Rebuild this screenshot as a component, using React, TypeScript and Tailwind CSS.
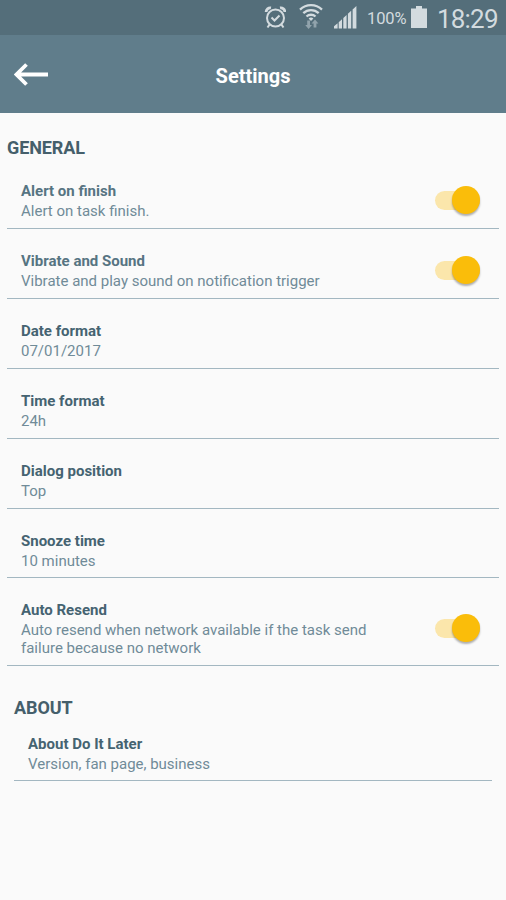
import { useState } from "react";

interface Setting {
    id: string;
    title: string;
    summary: string;
    toggle?: boolean;
    soft?: boolean;
}

const generalSettings: Setting[] = [
    { id: "alert", title: "Alert on finish", summary: "Alert on task finish.", toggle: true, soft: true },
    { id: "vibrate", title: "Vibrate and Sound", summary: "Vibrate and play sound on notification trigger", toggle: true, soft: true },
    { id: "date", title: "Date format", summary: "07/01/2017" },
    { id: "time", title: "Time format", summary: "24h" },
    { id: "dialog", title: "Dialog position", summary: "Top" },
    { id: "snooze", title: "Snooze time", summary: "10 minutes" },
    { id: "resend", title: "Auto Resend", summary: "Auto resend when network available if the task send failure because no network", toggle: true },
];

const aboutSettings: Setting[] = [
    { id: "about", title: "About Do It Later", summary: "Version, fan page, business" },
];

function AlarmIcon() {
    return (
        <svg width="22" height="24" viewBox="0 0 22 24" fill="none" stroke="currentColor" strokeWidth="2">
            <circle cx="11.500" cy="12" r="8.500" />
            <path d="M7.500 11.500l3 3 5-5" />
            <path d="M2.100 6.100A4.200 4.200 0 0 1 7 1.900M20.900 6.100a4.200 4.200 0 0 0-4.900-4.200" strokeWidth="2.800" />
            <path d="M5.500 18.700l-2 2.800M17.500 18.700l2 2.800" />
        </svg>
    );
}

function WifiIcon() {
    return (
        <svg width="24" height="26" viewBox="0 0 24 26" fill="none">
            <g stroke="currentColor" strokeWidth="2.300">
                <path d="M1 6.600a16 16 0 0 1 22 0" />
                <path d="M4.300 10.200a11.200 11.200 0 0 1 15.400 0" />
                <path d="M7.500 13.500a6.600 6.600 0 0 1 9 0" />
            </g>
            <path d="M9.600 15.500a3.600 3.600 0 0 1 4.800 0L12 18z" fill="currentColor" />
            <path d="M8.200 17.500h2.800v4.500h2L9.600 26 6.200 22h2zM14.600 24.500v-4h-2l3.400-4 3.400 4h-2v4z" fill="#91a3ac" />
        </svg>
    );
}

function SignalIcon() {
    return (
        <svg width="23" height="23" viewBox="0 0 23 23" fill="currentColor">
            <path d="M0 22.500v-2.200l3.600-3v5.200zM4.700 22.500v-6.200l3.300-3v9.200zM9.300 22.500V12l3.300-3v13.500zM13.900 22.500V7.800l3.300-3v17.700zM18.600 22.500V3.500L22.400 0v22.500z" />
        </svg>
    );
}

function BatteryIcon() {
    return (
        <svg width="16" height="22" viewBox="0 0 16 22" fill="currentColor">
            <path d="M5 0h6v2.500h5V22H0V2.500h5z" />
        </svg>
    );
}

function StatusBar() {
    return (
        <div className="flex h-[35px] items-start bg-[#546e7a] pl-[264px] text-[#d3dbdf]">
            <div className="pt-[6px]"><AlarmIcon /></div>
            <div className="ml-[13px] pt-[3px]"><WifiIcon /></div>
            <div className="ml-[11px] pt-[6px]"><SignalIcon /></div>
            <span className="ml-[10px] w-[41px] whitespace-nowrap pt-[9px] text-[16.500px] leading-5 tracking-[-0.1px]">100%</span>
            <div className="ml-[3px] pt-[6px]"><BatteryIcon /></div>
            <span className="ml-[10px] whitespace-nowrap pt-[3px] text-[26px] leading-8 tracking-[-0.8px]">18:29</span>
        </div>
    );
}

function Toggle({ label }: { label: string }) {
    const [on, setOn] = useState(true);

    return (
        <button
            role="switch"
            aria-checked={on}
            aria-label={label}
            onClick={() => setOn((prev) => !prev)}
            className={`flex h-[19px] w-[45px] shrink-0 items-center self-center rounded-full ${on ? "justify-end bg-[#fbe6ab]" : "justify-start bg-[#c4cacd]"}`}
        >
            <span className={`mb-px h-[28px] w-[28px] shrink-0 rounded-full shadow-[0_2px_2px_rgba(0,0,0,0.3)] ${on ? "bg-[#fabd0a]" : "bg-[#f1f1f1]"}`} />
        </button>
    );
}

function SettingRow({ item }: { item: Setting }) {
    return (
        <li className="flex justify-between border-b border-[#a3b7c1] pb-[7.830px] pl-[14px] pr-[19px] pt-[22px]">
            <div className="w-[370px]">
                <p className={`text-[15px] font-bold leading-[20px] ${item.soft ? "text-[#567482]" : "text-[#456371]"}`}>{item.title}</p>
                <p className="pt-px text-[15px] leading-[18px] text-[#708b98]">{item.summary}</p>
            </div>
            {item.toggle && <Toggle label={item.title} />}
        </li>
    );
}

export default function App() {
    return (
        <div className="h-[900px] w-[506px] overflow-hidden bg-[#fafafa] font-['Roboto',sans-serif]">
            <StatusBar />
            <header className="grid h-[78px] grid-cols-[1fr_auto_1fr] items-center bg-[#607d8b] px-[14px] pt-[2px] text-white">
                <button aria-label="Back">
                    <svg width="35" height="24" viewBox="0 0 35 24" fill="none" stroke="currentColor" strokeWidth="3.800">
                        <path d="M12.500 1.500L2.500 11.500l10 10M3 11.500h31" />
                    </svg>
                </button>
                <h1 className="pt-px text-[20px] font-bold">Settings</h1>
            </header>

            <main>
                <section className="px-[7px] pt-[23.490px]">
                    <h2 className="text-[18px] font-bold leading-[23px] tracking-[-0.1px] text-[#455f6b]">GENERAL</h2>
                    <ul>
                        {generalSettings.map((item) => <SettingRow key={item.id} item={item} />)}
                    </ul>
                </section>
                <section className="px-[14px] pt-[29.300px]">
                    <h2 className="text-[18px] font-bold leading-[23px] tracking-[-0.1px] text-[#455f6b]">ABOUT</h2>
                    <ul className="-mt-[7px]">
                        {aboutSettings.map((item) => <SettingRow key={item.id} item={item} />)}
                    </ul>
                </section>
            </main>
        </div>
    );
}
